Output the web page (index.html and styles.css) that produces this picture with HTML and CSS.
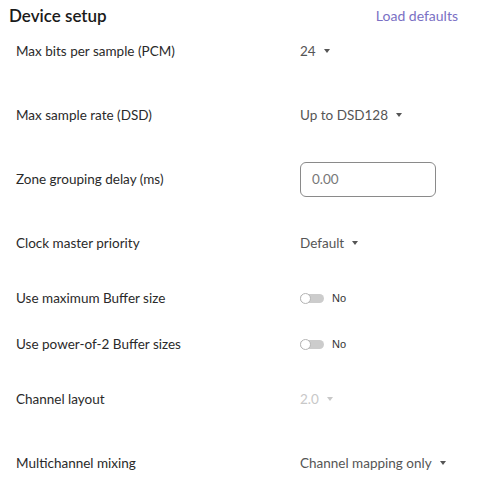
FILE: index.html
```html
<!DOCTYPE html>
<html>
<head>
<meta charset="utf-8">
<link rel="stylesheet" href="styles.css">
</head>
<body>
<div class="panel">
  <div class="header">
    <div class="title">Device setup</div>
    <a class="load">Load defaults</a>
  </div>
  <div class="row tall">
    <div class="label">Max bits per sample (PCM)</div>
    <div class="control"><span class="dd">24<span class="caret"></span></span></div>
  </div>
  <div class="row tall">
    <div class="label">Max sample rate (DSD)</div>
    <div class="control"><span class="dd">Up to DSD128<span class="caret"></span></span></div>
  </div>
  <div class="row tall">
    <div class="label">Zone grouping delay (ms)</div>
    <div class="control"><div class="input">0.00</div></div>
  </div>
  <div class="row tall">
    <div class="label">Clock master priority</div>
    <div class="control"><span class="dd">Default<span class="caret"></span></span></div>
  </div>
  <div class="row short">
    <div class="label">Use maximum Buffer size</div>
    <div class="control"><span class="toggle"><span class="knob"></span></span><span class="tlabel">No</span></div>
  </div>
  <div class="row short">
    <div class="label">Use power-of-2 Buffer sizes</div>
    <div class="control"><span class="toggle"><span class="knob"></span></span><span class="tlabel">No</span></div>
  </div>
  <div class="row tall">
    <div class="label">Channel layout</div>
    <div class="control"><span class="dd disabled">2.0<span class="caret"></span></span></div>
  </div>
  <div class="row tall">
    <div class="label">Multichannel mixing</div>
    <div class="control"><span class="dd">Channel mapping only<span class="caret"></span></span></div>
  </div>
</div>
</body>
</html>
```

FILE: styles.css
```css
html, body {
  margin: 0;
  padding: 0;
  background: #ffffff;
}
body {
  font-family: Lato, "Liberation Sans", sans-serif;
  color: #222222;
}
.panel {
  width: 479px;
}
.header {
  display: flex;
  justify-content: space-between;
  align-items: flex-start;
  height: 19px;
  padding: 6px 21px 0 9px;
  box-sizing: border-box;
}
.title {
  font-size: 17px;
  font-weight: 600;
  line-height: 20px;
  color: #1a1a1a;
}
.load {
  font-size: 14px;
  line-height: 20px;
  color: #7a70c4;
}
.row {
  display: flex;
  align-items: center;
  padding-left: 16px;
}
.row.tall { height: 64px; }
.row.short { height: 46px; }
.label {
  width: 284px;
  font-size: 13.5px;
  line-height: 16px;
  color: #2a2a2a;
}
.control {
  display: flex;
  align-items: center;
}
.dd {
  display: inline-flex;
  align-items: center;
  font-size: 13.5px;
  line-height: 16px;
  color: #555555;
}
.caret {
  display: inline-block;
  width: 0;
  height: 0;
  margin-left: 8px;
  border-left: 3.5px solid transparent;
  border-right: 3.5px solid transparent;
  border-top: 4px solid #555555;
}
.dd.disabled { color: #c8c8c8; }
.dd.disabled .caret { border-top-color: #c8c8c8; }
.input {
  width: 136px;
  height: 35px;
  box-sizing: border-box;
  border: 1px solid #8a8a8a;
  border-radius: 6px;
  padding-left: 11px;
  font-size: 13.5px;
  line-height: 33px;
  color: #777777;
}
.toggle {
  position: relative;
  display: inline-block;
  width: 24px;
  height: 9px;
  border-radius: 5px;
  background: #cccccc;
}
.knob {
  position: absolute;
  left: 0;
  top: -1px;
  width: 9px;
  height: 9px;
  border-radius: 50%;
  background: #ffffff;
  border: 1px solid #b5b5b5;
}
.tlabel {
  margin-left: 8px;
  font-family: "Liberation Sans", Arial, sans-serif;
  font-size: 11px;
  color: #333333;
}
```
